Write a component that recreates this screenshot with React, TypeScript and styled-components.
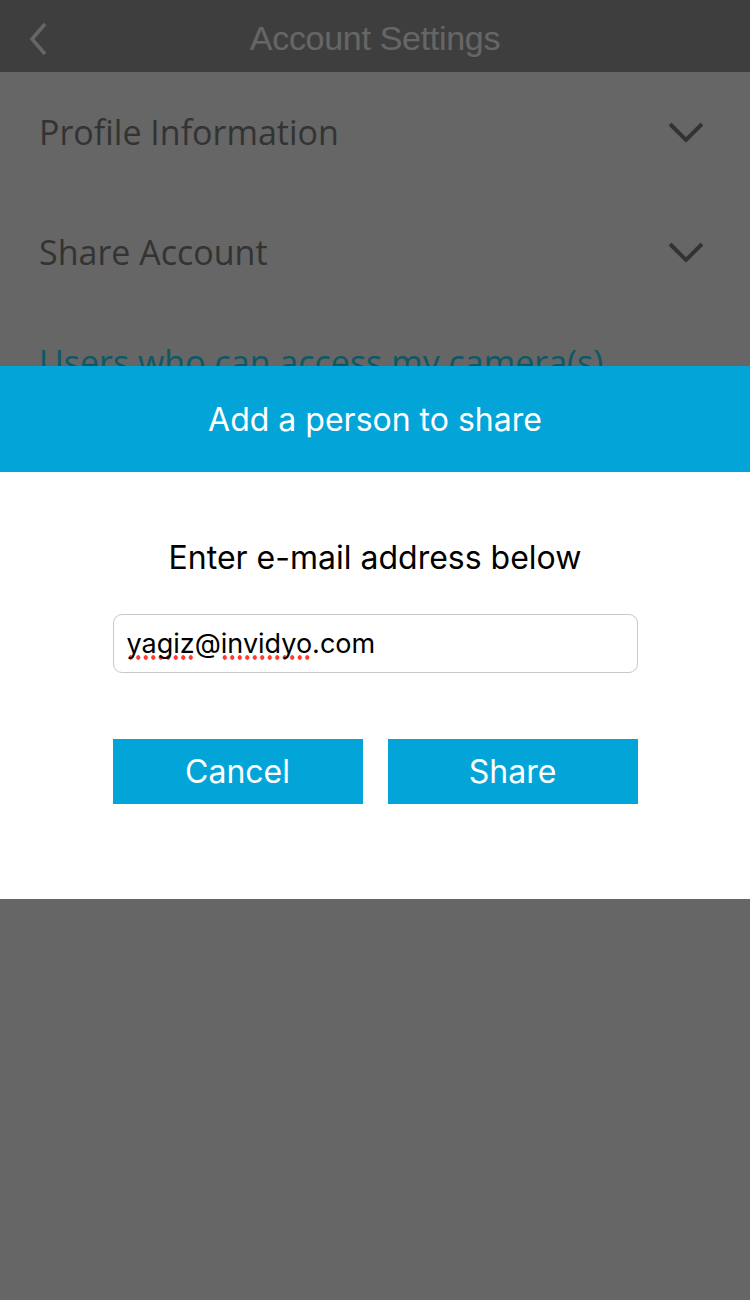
import React from 'react'
import styled, { createGlobalStyle } from 'styled-components'

const GlobalStyle = createGlobalStyle`
  html, body {
    margin: 0;
    padding: 0;
    background: #ffffff;
  }
  body {
    font-family: "Liberation Sans", Arial, sans-serif;
  }
`

const Screen = styled.div`
  width: 750px;
  height: 1300px;
  background: #ffffff;
  position: relative;
  overflow: hidden;
`

const NavBar = styled.div`
  height: 72px;
  background: #9c9c9c;
  display: flex;
  align-items: center;
  justify-content: center;
  position: relative;
`

const BackButton = styled.button`
  position: absolute;
  left: 24px;
  top: 20px;
  width: 30px;
  height: 38px;
  border: 0;
  padding: 0;
  background: none;
  display: flex;
  align-items: center;
  justify-content: center;
`

const NavTitle = styled.h1`
  margin: 4px 0 0;
  font-family: "Liberation Sans", Arial, sans-serif;
  font-weight: 400;
  font-size: 34px;
  letter-spacing: -0.3px;
  color: #ffffff;
`

const Section = styled.div<{ $h: number }>`
  height: ${(p) => p.$h}px;
  display: flex;
  align-items: center;
  justify-content: space-between;
  padding: 0 46px 0 39px;
  box-sizing: border-box;
  white-space: nowrap;
`

const SectionLabel = styled.span<{ $link?: boolean }>`
  font-family: "Open Sans", "Noto Sans", sans-serif;
  font-stretch: 90%;
  font-size: 34px;
  color: ${(p) => (p.$link ? '#24dcff' : '#808080')};
`

const Backdrop = styled.div`
  position: absolute;
  inset: 0;
  background: rgba(0, 0, 0, 0.6);
  padding-top: 366px;
  box-sizing: border-box;
`

const Dialog = styled.div`
  background: #ffffff;
`

const DialogHead = styled.div`
  height: 106px;
  background: #03a5d9;
  display: flex;
  align-items: center;
  justify-content: center;
  color: #ffffff;
  font-family: "Inter", "Liberation Sans", sans-serif;
  font-size: 32px;
`

const DialogBody = styled.div`
  height: 427px;
  box-sizing: border-box;
  padding-top: 66px;
  display: flex;
  flex-direction: column;
  align-items: center;
  font-family: "Inter", "Liberation Sans", sans-serif;
`

const Prompt = styled.p`
  margin: 0;
  height: 40px;
  line-height: 40px;
  font-size: 32px;
  color: #000000;
`

const EmailField = styled.div`
  margin-top: 36px;
  width: 525px;
  height: 59px;
  box-sizing: border-box;
  border: 1px solid #c8c8c8;
  border-radius: 9px;
  padding: 0 13px;
  display: flex;
  align-items: center;
  font-size: 27px;
  color: #000000;
`

const Misspelled = styled.span`
  background-image: radial-gradient(circle, #ff3b30 2px, transparent 2.5px);
  background-size: 7.5px 5px;
  background-repeat: repeat-x;
  background-position: 0 100%;
`

const Actions = styled.div`
  margin-top: 66px;
  width: 525px;
  display: flex;
  gap: 25px;
`

const ActionButton = styled.button`
  flex: 1;
  height: 65px;
  border: 0;
  border-radius: 0;
  background: #03a5d9;
  color: #ffffff;
  font-family: "Inter", "Liberation Sans", sans-serif;
  font-size: 32px;
  padding: 0;
`

const Chevron = ({ dir, color, w }: { dir: 'left' | 'down'; color: string; w: number }) =>
  dir === 'down' ? (
    <svg width="36" height="22" viewBox="0 0 36 22">
      <path d="M2 3 L18 19 L34 3" fill="none" stroke={color} strokeWidth={w} />
    </svg>
  ) : (
    <svg width="22" height="34" viewBox="0 0 22 34">
      <path d="M17 2 L4 17 L17 32" fill="none" stroke={color} strokeWidth={w} />
    </svg>
  )

export default function App() {
  return (
    <Screen>
      <GlobalStyle />
      <NavBar>
        <BackButton aria-label="Back">
          <Chevron dir="left" color="#ffffff" w={3.5} />
        </BackButton>
        <NavTitle>Account Settings</NavTitle>
      </NavBar>
      <Section $h={120}>
        <SectionLabel>Profile Information</SectionLabel>
        <Chevron dir="down" color="#808080" w={4} />
      </Section>
      <Section $h={120}>
        <SectionLabel>Share Account</SectionLabel>
        <Chevron dir="down" color="#808080" w={4} />
      </Section>
      <Section $h={100}>
        <SectionLabel $link>Users who can access my camera(s)</SectionLabel>
      </Section>

      <Backdrop>
        <Dialog>
          <DialogHead>Add a person to share</DialogHead>
          <DialogBody>
            <Prompt>Enter e-mail address below</Prompt>
            <EmailField>
              <Misspelled>yagiz</Misspelled>@<Misspelled>invidyo</Misspelled>.com
            </EmailField>
            <Actions>
              <ActionButton>Cancel</ActionButton>
              <ActionButton>Share</ActionButton>
            </Actions>
          </DialogBody>
        </Dialog>
      </Backdrop>
    </Screen>
  )
}
